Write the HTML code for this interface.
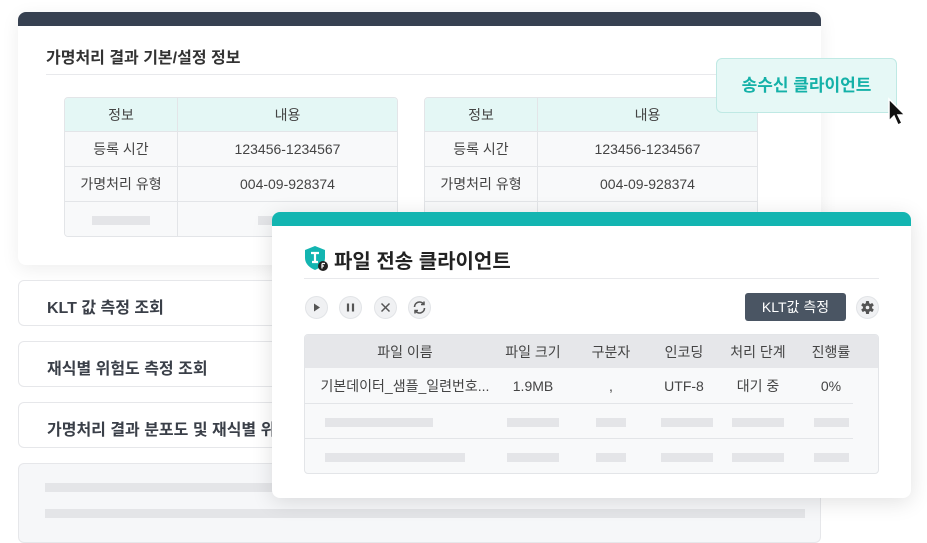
<!DOCTYPE html>
<html><head><meta charset="utf-8"><style>
*{box-sizing:border-box;margin:0;padding:0}
body{width:927px;height:530px;background:#fff;position:relative;overflow:hidden;font-family:"Liberation Sans","Noto Sans CJK KR",sans-serif;color:#333}
.a{position:absolute}
.back{left:18px;top:12px;width:803px;height:253px;background:#fff;border-radius:8px;overflow:hidden;box-shadow:0 4px 18px rgba(0,0,0,.07)}
.bar{height:14px;background:#374151}
.t1{left:28px;top:32px;font-size:16px;font-weight:bold;color:#333}
.ul{height:1px;background:#e8e9ec}
table{border-collapse:separate;border-spacing:0;font-size:14px;color:#444}
.it{position:absolute;width:334px;border:1px solid #e3e5e8;border-radius:4px;overflow:hidden}
.it td{height:35px;text-align:center;border-right:1px solid #e3e5e8;border-top:1px solid #e3e5e8;background:#f8f9fa}
.it tr:first-child td{border-top:none;background:#e4f7f5;height:33px}
.it td:last-child{border-right:none}
.sk{display:inline-block;height:9px;background:#e4e5e8;vertical-align:middle}
.acc{left:18px;width:803px;height:46px;border:1px solid #e6e7ea;border-radius:6px;background:#fff;font-size:16px;font-weight:bold;padding:13px 28px;color:#3a3f48}
.front{left:272px;top:212px;width:639px;height:286px;background:#fff;border-radius:8px;overflow:hidden;box-shadow:0 4px 22px rgba(0,0,0,.12)}
.circ{position:absolute;width:23px;height:23px;border-radius:50%;background:#f0f1f3;border:1px solid #e2e4e7;top:84px}
.ft{position:absolute;left:32px;top:122px;width:575px;border:1px solid #e3e5e8;border-radius:4px;overflow:hidden;background:#f8f9fa;table-layout:fixed}
.ft td{text-align:center;height:35px;font-size:14px;color:#444;border-top:1px solid #e3e5e8;white-space:nowrap;overflow:visible}
.ft tr:first-child td{background:#e6e7ea;border-top:none;height:33px}
.ft tr:nth-child(2) td{border-top:none}
.ft td.e{border-top-color:transparent}
</style></head><body>
<div class="a back"><div class="bar"></div>
<div class="a t1">가명처리 결과 기본/설정 정보</div>
<div class="a ul" style="left:28px;top:62px;width:775px"></div>
<table class="it" style="left:46px;top:85px"><tr><td style="width:113px">정보</td><td>내용</td></tr><tr><td>등록 시간</td><td>123456-1234567</td></tr><tr><td>가명처리 유형</td><td>004-09-928374</td></tr><tr><td><span class="sk" style="width:58px"></span></td><td><span class="sk" style="width:60px"></span></td></tr></table>
<table class="it" style="left:406px;top:85px"><tr><td style="width:113px">정보</td><td>내용</td></tr><tr><td>등록 시간</td><td>123456-1234567</td></tr><tr><td>가명처리 유형</td><td>004-09-928374</td></tr><tr><td><span class="sk" style="width:58px"></span></td><td><span class="sk" style="width:60px"></span></td></tr></table>
</div>
<div class="a acc" style="top:280px">KLT 값 측정 조회</div>
<div class="a acc" style="top:341px">재식별 위험도 측정 조회</div>
<div class="a acc" style="top:402px">가명처리 결과 분포도 및 재식별 위험도</div>
<div class="a" style="left:18px;top:463px;width:803px;height:80px;border:1px solid #e6e7ea;border-radius:6px;background:#f6f7f9">
<div class="a" style="left:26px;top:19px;width:760px;height:9px;background:#e4e5e8"></div>
<div class="a" style="left:26px;top:45px;width:760px;height:9px;background:#e4e5e8"></div></div>

<div class="a" style="left:716px;top:58px;width:181px;height:55px;background:#e6f8f6;border:1px solid #bfe9e4;border-radius:6px;color:#14b1a8;font-weight:bold;font-size:17px;text-align:center;line-height:53px">송수신 클라이언트</div>
<svg class="a" style="left:886px;top:97px" width="24" height="32" viewBox="0 0 24 32"><path d="M3 2 L3 24 L8 19 L12 28 L16 26 L12 18 L19 18 Z" fill="#111" stroke="#fff" stroke-width="1.5"/></svg>

<div class="a front">
<div style="height:14px;background:#13b5b1"></div>
<svg class="a" style="left:32px;top:33px" width="26" height="28" viewBox="0 0 26 28"><path d="M11 1 L21 5 V13 C21 19 16 23 11 25 C6 23 1 19 1 13 V5 Z" fill="#13b5b1"/><path d="M7 8h8M11 8v9M8 17h6" stroke="#fff" stroke-width="2.2"/><circle cx="19" cy="21" r="5" fill="#222"/><path d="M18 18.5h3M18 18.5v5M18 21h2" stroke="#fff" stroke-width="1.2"/></svg>
<div class="a" style="left:62px;top:33px;font-size:20px;font-weight:bold;color:#222">파일 전송 클라이언트</div>
<div class="a ul" style="left:32px;top:66px;width:575px"></div>
<div class="circ" style="left:33px"><svg width="21" height="21"><path d="M8 6.5v8l6-4z" fill="#555"/></svg></div>
<div class="circ" style="left:67px"><svg width="21" height="21"><path d="M8 6.5v8M13 6.5v8" stroke="#555" stroke-width="2.2"/></svg></div>
<div class="circ" style="left:102px"><svg width="21" height="21"><path d="M6.5 6.5l8 8M14.5 6.5l-8 8" stroke="#555" stroke-width="1.5"/></svg></div>
<div class="circ" style="left:136px"><svg width="21" height="21"><path d="M5.5 10a5 5 0 0 1 9-3M15.5 11a5 5 0 0 1-9 3" stroke="#555" stroke-width="1.6" fill="none"/><path d="M15 4.5v3h-3M6 16.5v-3h3" stroke="#555" stroke-width="1.5" fill="none"/></svg></div>
<div class="a" style="left:473px;top:81px;width:101px;height:28px;background:#4a5563;border-radius:3px;color:#fff;font-size:14px;text-align:center;line-height:28px">KLT값 측정</div>
<div class="circ" style="left:584px;top:84px"><svg width="21" height="21" viewBox="0 0 21 21"><g fill="#555" transform="translate(10.5 10.5)"><rect x="-1.6" y="-6.5" width="3.2" height="13" rx="0.8"/><rect x="-1.6" y="-6.5" width="3.2" height="13" rx="0.8" transform="rotate(60)"/><rect x="-1.6" y="-6.5" width="3.2" height="13" rx="0.8" transform="rotate(120)"/><circle r="4.6"/></g><circle cx="10.5" cy="10.5" r="1.8" fill="#f0f1f3"/></svg></div>
<table class="ft"><colgroup><col style="width:200px"><col style="width:56px"><col style="width:100px"><col style="width:46px"><col style="width:102px"><col style="width:44px"><col></colgroup>
<tr><td>파일 이름</td><td>파일 크기</td><td>구분자</td><td>인코딩</td><td>처리 단계</td><td>진행률</td><td></td></tr>
<tr><td>기본데이터_샘플_일련번호...</td><td>1.9MB</td><td>,</td><td>UTF-8</td><td>대기 중</td><td>0%</td><td></td></tr>
<tr><td style="text-align:left;padding-left:20px"><span class="sk" style="width:108px"></span></td><td><span class="sk" style="width:52px"></span></td><td><span class="sk" style="width:30px"></span></td><td><span class="sk" style="width:52px"></span></td><td><span class="sk" style="width:52px"></span></td><td><span class="sk" style="width:35px"></span></td><td class="e"></td></tr>
<tr><td style="text-align:left;padding-left:20px"><span class="sk" style="width:140px"></span></td><td><span class="sk" style="width:52px"></span></td><td><span class="sk" style="width:30px"></span></td><td><span class="sk" style="width:52px"></span></td><td><span class="sk" style="width:52px"></span></td><td><span class="sk" style="width:35px"></span></td><td class="e"></td></tr></table>
</div>
</body></html>
